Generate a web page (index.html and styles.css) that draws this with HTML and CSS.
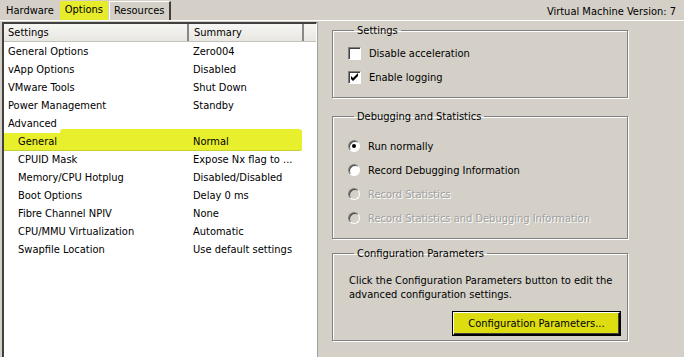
FILE: index.html
```html
<!DOCTYPE html>
<html lang="en">
<head>
    <meta charset="UTF-8">
    <title>Virtual Machine Properties - Options</title>
    <link rel="stylesheet" href="styles.css">
</head>
<body>
    <div class="topbar">
        <div class="tabs">
            <span class="tab">Hardware</span>
            <span class="tab active">Options</span>
            <span class="tab last">Resources</span>
        </div>
        <div class="version">Virtual Machine Version: 7</div>
    </div>

    <div class="main">
        <div class="list">
            <div class="list-head">
                <div class="col-a">Settings</div>
                <div class="col-b">Summary</div>
                <div class="col-c"></div>
            </div>
            <div class="rows" id="rows"></div>
        </div>

        <div class="pane">
            <fieldset class="group">
                <legend>Settings</legend>
                <label class="opt"><span class="check"></span>Disable acceleration</label>
                <label class="opt"><span class="check on">
                    <svg width="9" height="9" viewBox="0 0 9 9"><path d="M1 3 L3 5 L8 0 L8 3 L3 8 L1 6 Z" fill="#000"/></svg>
                </span>Enable logging</label>
            </fieldset>

            <fieldset class="group debug">
                <legend>Debugging and Statistics</legend>
                <label class="opt"><span class="radio on"></span>Run normally</label>
                <label class="opt"><span class="radio"></span>Record Debugging Information</label>
                <label class="opt off"><span class="radio"></span>Record Statistics</label>
                <label class="opt off"><span class="radio"></span>Record Statistics and Debugging Information</label>
            </fieldset>

            <fieldset class="group config">
                <legend>Configuration Parameters</legend>
                <p>Click the Configuration Parameters button to edit the<br>advanced configuration settings.</p>
                <div class="btn-row">
                    <button class="btn">Configuration Parameters...</button>
                </div>
            </fieldset>
        </div>
    </div>

    <script>
        // rows of the settings list: [name, summary, indented, highlighted]
        const rows = [
            ['General Options', 'Zero004', false],
            ['vApp Options', 'Disabled', false],
            ['VMware Tools', 'Shut Down', false],
            ['Power Management', 'Standby', false],
            ['Advanced', '', false],
            ['General', 'Normal', true, true],
            ['CPUID Mask', 'Expose Nx flag to ...', true],
            ['Memory/CPU Hotplug', 'Disabled/Disabled', true],
            ['Boot Options', 'Delay 0 ms', true],
            ['Fibre Channel NPIV', 'None', true],
            ['CPU/MMU Virtualization', 'Automatic', true],
            ['Swapfile Location', 'Use default settings', true]
        ];

        const list = document.getElementById('rows');
        rows.forEach(r => {
            const row = document.createElement('div');
            row.className = 'row' + (r[2] ? ' sub' : '') + (r[3] ? ' marked' : '');
            row.innerHTML = `<div class="col-a">${r[0]}</div><div class="col-b">${r[1]}</div>`;
            list.appendChild(row);
        });
    </script>
</body>
</html>
```

FILE: styles.css
```css
body {
    margin: 0;
    width: 684px;
    height: 357px;
    overflow: hidden;
    background: #d4d0c8;
    font-family: Tahoma, "DejaVu Sans Condensed", "Liberation Sans", sans-serif;
    font-size: 11px;
    color: #000;
}
.topbar {
    display: flex;
    justify-content: space-between;
    height: 20px;
    border-bottom: 1px solid #fff;
}
.tabs {
    display: flex;
    align-items: flex-end;
    padding-left: 2px;
}
.tab {
    height: 18px;
    line-height: 18px;
    padding: 0 5px 0 4px;
}
.tab.active {
    background: #e6ec2c;
    height: 19px;
    padding: 0 5px;
    margin: 0 1px;
}
.tab.last {
    border-left: 1px solid #fff;
    border-right: 2px solid #404040;
    border-top: 1px solid #fff;
    padding-right: 5px;
}
.version {
    line-height: 23px;
    padding-right: 8px;
}
.main {
    display: flex;
    height: 336px;
}
.list {
    width: 312px;
    margin-left: 2px;
    margin-top: 1px;
    background: #fff;
    border-left: 2px solid #404040;
    border-top: 2px solid #404040;
    border-right: 1px solid #fff;
    box-shadow: 1px 0 0 #a0a0a0;
}
.list-head {
    display: flex;
    height: 17px;
    line-height: 17px;
    background: linear-gradient(#f6f6f4, #e8e6e0);
    border-bottom: 1px solid #c4c2bc;
}
.list-head .col-a {
    width: 179px;
    padding-left: 4px;
    border-right: 2px solid #888;
}
.list-head .col-b {
    width: 108px;
    padding-left: 5px;
    border-right: 2px solid #888;
}
.list-head .col-c {
    flex: 1;
}
.rows {
    padding-top: 1px;
}
.row {
    display: flex;
    height: 18px;
    line-height: 18px;
}
.row .col-a {
    width: 177px;
    padding-left: 4px;
}
.row.sub .col-a {
    padding-left: 14px;
    width: 167px;
}
.row .col-b {
    padding-left: 8px;
}
.row.marked {
    position: relative;
    background: #e8ef2c;
    margin-right: 14px;
    border-radius: 0 3px 3px 0;
    box-shadow: inset 0 -1px 0 #c8d030;
}
/* marker stroke spilling over the row above */
.row.marked::before {
    content: "";
    position: absolute;
    left: 56px;
    right: 0;
    top: -4px;
    height: 6px;
    border-radius: 3px 3px 0 0;
    background: #e8ef2c;
}
.row.marked > div {
    position: relative;
}
.pane {
    flex: 1;
    padding: 3px 56px 0 15px;
}
.group {
    margin: 0 0 12px;
    padding: 4px 14px 8px 15px;
    border: 1px solid #808080;
    box-shadow: inset 1px 1px 0 #fff, 1px 1px 0 #fff;
}
.group legend {
    padding: 0 3px;
    margin-left: 6px;
}
.opt {
    display: flex;
    align-items: center;
    height: 24px;
}
.opt.off {
    color: #a0a0a0;
    text-shadow: 1px 1px 0 #fff;
}
.check {
    display: inline-flex;
    align-items: center;
    justify-content: center;
    width: 11px;
    height: 11px;
    margin-right: 8px;
    background: #fff;
    border: 1px solid;
    border-color: #808080 #fff #fff #808080;
    box-shadow: inset 1px 1px 0 #404040, 1px 1px 0 #d4d0c8;
}
.radio {
    width: 10px;
    height: 10px;
    margin-right: 8px;
    border-radius: 50%;
    background: #fff;
    border: 1px solid;
    border-color: #808080 #fff #fff #808080;
    box-shadow: inset 1px 1px 0 #404040;
    position: relative;
}
.opt.off .radio {
    background: #d4d0c8;
}
.radio.on::after {
    content: "";
    position: absolute;
    left: 3px;
    top: 3px;
    width: 4px;
    height: 4px;
    border-radius: 50%;
    background: #000;
}
.group.debug {
    padding-top: 11px;
    margin-bottom: 8px;
}
.group.config {
    padding-bottom: 5px;
}
.config p {
    margin: 10px 0 10px 1px;
    line-height: 14px;
}
.btn-row {
    display: flex;
    justify-content: flex-end;
    margin-right: -7px;
}
.btn {
    font: inherit;
    width: 167px;
    height: 23px;
    background: #dcdc10;
    border: 1px solid;
    border-color: #fff #000 #000 #fff;
    box-shadow: inset -1px -1px 0 #404040, 0 0 0 1px #000;
}
```
